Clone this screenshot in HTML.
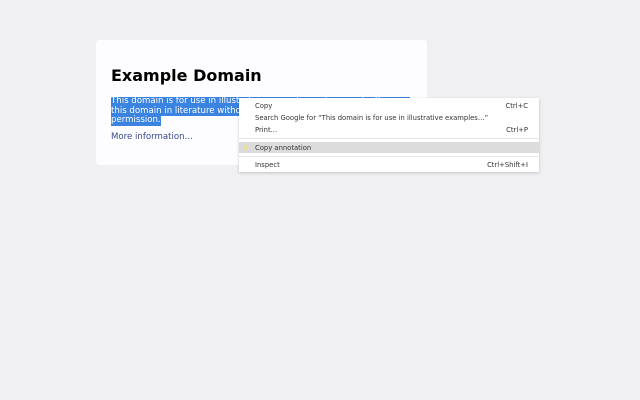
<!DOCTYPE html>
<html><head><style>
body{margin:0;width:640px;height:400px;background:#f0f0f2;font-family:"DejaVu Sans","Liberation Sans",sans-serif;position:relative;overflow:hidden}
.card{position:absolute;left:96px;top:40px;width:331px;height:125px;background:#fdfdff;border-radius:3px}
h1{position:absolute;left:111px;top:66px;margin:0;font-size:16px;font-weight:bold;color:#000}
.sel{position:absolute;left:111px;font-size:8.6px;line-height:9.5px;color:#fff;background:#3b83e0;white-space:nowrap}
.more{position:absolute;left:111px;top:132px;font-size:8.6px;color:#38488f}
.menu{position:absolute;left:239px;top:98px;width:300px;height:74px;background:#fff;box-shadow:0 1px 3px rgba(0,0,0,.2);font-size:6.8px;color:#333}
.it{position:absolute;left:16px;right:11px;height:10px;line-height:10px}
.it span{position:absolute;right:0}
.sep{position:absolute;left:0;right:0;height:1px;background:#e6e6e6}
</style></head><body>
<div class="card"></div>
<h1>Example Domain</h1>
<div class="sel" style="top:97px;width:299px">This domain is for use in illustrative examples in documents. You may use</div>
<div class="sel" style="top:106.5px;width:299px">this domain in literature without prior coordination or asking for</div>
<div class="sel" style="top:116px">permission.</div>
<div class="more">More information...</div>
<div class="menu">
<div class="it" style="top:3px">Copy<span>Ctrl+C</span></div>
<div class="it" style="top:15px">Search Google for “This domain is for use in illustrative examples…”</div>
<div class="it" style="top:27px">Print...<span>Ctrl+P</span></div>
<div class="sep" style="top:40px"></div>
<div style="position:absolute;left:0;right:0;top:44px;height:11px;background:#dcdcdc"></div>
<div style="position:absolute;left:4px;top:47px;width:5px;height:5px;background:#e8e0a0"></div>
<div class="it" style="top:45px">Copy annotation</div>
<div class="sep" style="top:58px"></div>
<div class="it" style="top:62px">Inspect<span>Ctrl+Shift+I</span></div>
</div>
</body></html>
